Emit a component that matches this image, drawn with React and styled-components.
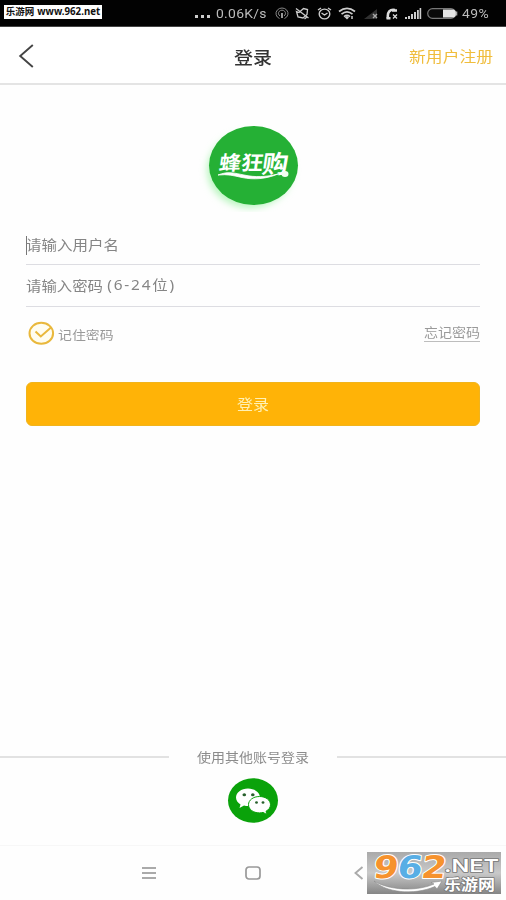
import React from 'react'
import styled, { createGlobalStyle } from 'styled-components';

const GlobalStyle = createGlobalStyle`
  body {
    margin: 0;
    background: #fefefe;
    font-family: "Noto Sans", "Noto Sans CJK SC", sans-serif;
  }

  svg {
    display: block;
    flex: none;
  }
`;

const Screen = styled.div`
  position: relative;
  display: flex;
  flex-direction: column;
  width: 506px;
  height: 900px;
  overflow: hidden;
  background: #fefefe;
`;

// The app's type is wider than it is tall
const Label = styled.span`
  display: inline-block;
  flex: none;
  white-space: nowrap;
  line-height: 1;
  font-family: ${props => props.$font || '"Noto Sans CJK SC", sans-serif'};
  font-size: ${props => props.$size}px;
  font-weight: ${props => props.$weight || 400};
  letter-spacing: ${props => props.$spacing || 0}px;
  color: ${props => props.$color};
  transform: scaleY(${props => props.$squash || 0.9});
`;

const StatusBar = styled.div`
  height: 27px;
  flex: none;
  box-sizing: border-box;
  padding: 1px 16px 0 4px;
  display: flex;
  align-items: center;
  justify-content: space-between;
  background: #020202;
  border-bottom: 1px solid #444;
`;

const SiteTag = styled.div`
  width: 98px;
  height: 14px;
  margin-top: -4px;
  display: flex;
  align-items: center;
  justify-content: center;
  gap: 3px;
  background: #fff;
`;

const StatusIcons = styled.div`
  display: flex;
  align-items: center;
`;

const Slot = styled.div`
  width: ${props => props.$width}px;
  margin-right: ${props => props.$gap || 0}px;
  display: flex;
  align-items: center;
  white-space: nowrap;
`;

const Header = styled.header`
  height: 58px;
  flex: none;
  box-sizing: border-box;
  padding: 2px 13px 0 18px;
  display: grid;
  grid-template-columns: 1fr auto 1fr;
  align-items: center;
  border-bottom: 2px solid #e4e4e4;
  background: #fff;
`;

const HeaderAction = styled.div`
  display: flex;
  justify-content: flex-end;
`;

const HeaderTitle = styled.div`
  display: flex;
  margin-right: 5px;
`;

const LogoWrap = styled.div`
  height: 141px;
  flex: none;
  display: flex;
  justify-content: center;
  padding-top: 31px;
  box-sizing: border-box;
`;

const Form = styled.main`
  flex: none;
  padding: 0 26px;
`;

const Field = styled.div`
  height: ${props => props.$height}px;
  box-sizing: border-box;
  display: flex;
  align-items: center;
  border-bottom: 1px solid #dddde2;
`;

const Caret = styled.i`
  width: 1px;
  height: 19px;
  margin-right: -1px;
  background: #777;
`;

const Options = styled.div`
  height: 75px;
  box-sizing: border-box;
  padding: 12px 0 0 2px;
  display: flex;
  justify-content: space-between;
  align-items: flex-start;
`;

const Remember = styled.div`
  display: flex;
  align-items: center;
  gap: 3px;
  height: 29px;
`;

const RememberText = styled.div`
  display: flex;
  padding-top: 5px;
`;

const Forgot = styled.div`
  margin-top: 6px;
  height: 17px;
  box-sizing: border-box;
  display: flex;
  align-items: center;
  padding-bottom: 2px;
  border-bottom: 1px solid #bdbdbd;
`;

const SubmitButton = styled.button`
  display: flex;
  align-items: center;
  justify-content: center;
  width: 454px;
  height: 44px;
  padding: 0;
  border: 1px solid #f1b41c;
  border-radius: 6px;
  background: #ffb307;
`;

const OtherLogin = styled.section`
  margin-top: auto;
  height: 96px;
  flex: none;
  display: flex;
  flex-direction: column;
  align-items: center;
`;

const Divider = styled.div`
  width: 100%;
  height: 16px;
  display: flex;
  align-items: center;
  justify-content: space-between;
`;

const Rule = styled.div`
  width: 169px;
  height: 2px;
  background: #e2e2e2;
`;

const WechatWrap = styled.div`
  margin-top: 13px;
`;

const NavBar = styled.nav`
  height: 55px;
  flex: none;
  box-sizing: border-box;
  padding: 0 141px;
  display: flex;
  align-items: center;
  gap: 88px;
  border-top: 1px solid #f7f7f7;
`;

const NavBack = styled.div`
  margin-left: 5px;
`;

const Watermark = styled.div`
  position: absolute;
  left: 367px;
  top: 852px;
  width: 134px;
  height: 42px;
  background: linear-gradient(#aaaaaa, #c9c9c9 50%, #858585);
`;

const SignalIcon = ({ color, off }) => (
  <svg width="17" height="12" viewBox="0 0 17 12" fill={color}>
    {off
      ? <path d="M1 11 14 1v10z" fill="#303030" />
      : <path d="M0 9h2v2H0zM3 8h2v3H3zM6 6h2v5H6zM9 4h2v7H9zM12 2h1.8v9H12zM14.6 0h1.6v11h-1.6z" />}
    {off && <path d="m10 6 4 4m0-4-4 4" stroke="#aaa" strokeWidth="1.4" />}
  </svg>
);

const HotspotIcon = () => (
  <svg width="14" height="13" viewBox="0 0 14 13" fill="none" stroke="#888" strokeWidth="1">
    <path d="M4.5 11.5a6 5.5 0 1 1 5 0M5 9a3.5 3.2 0 1 1 4 0" />
    <path d="M7 6v5" stroke="#aaa" strokeWidth="1.8" />
  </svg>
);

const MuteIcon = () => (
  <svg width="15" height="13" viewBox="0 0 15 13" fill="none" stroke="#ccc" strokeWidth="1.3">
    <path d="M1.500 4.500 4 5.500 8.500 1.500l4 1-.5 5-4 3.500-5-1z" />
    <path d="M1 1.500 13.500 11M9.500 12l3-2.500" />
  </svg>
);

const AlarmIcon = () => (
  <svg width="15" height="13" viewBox="0 0 15 13" fill="none" stroke="#ccc" strokeWidth="1.4">
    <ellipse cx="7.5" cy="7" rx="5.300" ry="4.900" />
    <path d="M1 3 4 1M14 3l-3-2M4.500 6l3 2 3-2" />
  </svg>
);

const WifiIcon = () => (
  <svg width="18" height="13" viewBox="0 0 18 13" fill="none" stroke="#ccc" strokeWidth="1.7">
    <path d="M1 4.500c5-4 11-4 16 0M3.500 7.200c3.500-2.900 7.500-2.900 11 0M6 9.600c2-1.600 4-1.600 6 0" />
    <path d="m9 9-2.500 1L9 12.500l2-2z" fill="#ccc" stroke="none" />
    <path d="M14 9v3" stroke="#999" strokeWidth="2" />
  </svg>
);

const CallIcon = () => (
  <svg width="14" height="12" viewBox="0 0 14 12" fill="none" stroke="#ddd">
    <path d="M10 2C5 1 2 4 3 10.500" strokeWidth="2.600" />
    <path d="M7 2.500h5M1.500 10.300h4" strokeWidth="2.400" />
    <path d="m8 6.500 4 4m0-4-4 4" strokeWidth="1.300" />
  </svg>
);

const BatteryIcon = () => (
  <svg width="31" height="11" viewBox="0 0 31 11">
    <rect x=".7" y=".7" width="28" height="9.600" rx="4.800" fill="#090909" stroke="#777" strokeWidth="1.200" />
    <path d="M16 1.500h9.500q3.500 0 3.500 4t-3.500 4H16z" fill="#e4e4e4" />
    <path d="M29.500 3.500v4" stroke="#aaa" strokeWidth="1.600" />
  </svg>
);

const BackIcon = () => (
  <svg width="16" height="24" viewBox="0 0 16 24" fill="none" stroke="#444" strokeWidth="1.900">
    <path d="M14.800 1 2.200 12l12.600 11" />
  </svg>
);

const BrandLogo = () => (
  <svg width="110" height="96" viewBox="0 0 110 96">
    <defs>
      <filter id="glow" x="-20%" y="-20%" width="140%" height="140%">
        <feGaussianBlur stdDeviation="3.500" />
      </filter>
    </defs>
    <ellipse cx="52" cy="54" rx="43" ry="38" fill="#b9f5bf" filter="url(#glow)" />
    <ellipse cx="55.500" cy="49.500" rx="44.500" ry="39.500" fill="#25b035" />
    <g fill="#fff" fontFamily="Noto Sans CJK SC, sans-serif" fontWeight="700" transform="skewX(-8)">
      <text x="28" y="54.500" fontSize="20" textLength="44" lengthAdjust="spacingAndGlyphs">蜂狂</text>
      <text x="71" y="57" fontSize="25" textLength="26" lengthAdjust="spacingAndGlyphs">购</text>
    </g>
    <path d="M20 59c10-4 16-2 26 0 11 2.500 22 2 34-1-12 5-24 6-36 3.500-9-2-14-3.500-24-2.500z" fill="#fff" stroke="#fff" strokeWidth=".8" />
    <ellipse cx="87" cy="58" rx="3.500" ry="3" fill="#f1fff0" />
  </svg>
);

const CheckIcon = () => (
  <svg width="27" height="25" viewBox="0 0 27 25" fill="none" stroke="#e9b83c" strokeWidth="2">
    <ellipse cx="13.300" cy="12.300" rx="11.800" ry="10.500" fill="#fffdf0" />
    <path d="m7.500 10.500 5.300 5L23 6.500" />
  </svg>
);

const WechatIcon = () => (
  <svg width="52" height="46" viewBox="0 0 52 46">
    <ellipse cx="26" cy="22.500" rx="25" ry="22.300" fill="#0aa20a" />
    <path d="M21 10.500c-6.800 0-12 4-12 9 0 3 1.800 5.200 4.500 6.900L12.500 30l4.500-2.500c1.500.4 2.600.5 4 .5 6.800 0 12-3.800 12-8.500s-5.200-9-12-9z" fill="#fff" />
    <path d="M32.500 18.500c-6.300 0-11 3.600-11 8.200s4.700 8.200 11 8.200c1.200 0 2.400-.2 3.500-.5l4 2.200-1-3.300c2.700-1.500 4.500-3.800 4.500-6.600 0-4.600-4.700-8.200-11-8.200z" fill="#fff" stroke="#0aa20a" />
    <g fill="#28602c">
      <ellipse cx="17.300" cy="16.800" rx="1.800" ry="1.500" />
      <ellipse cx="25.800" cy="16.800" rx="1.800" ry="1.500" />
      <ellipse cx="29.500" cy="24.500" rx="1.400" ry="1.200" />
      <ellipse cx="36" cy="24.500" rx="1.400" ry="1.200" />
    </g>
  </svg>
);

const WatermarkArt = () => (
  <svg width="134" height="42" viewBox="0 0 134 42" strokeLinejoin="round">
    <g fontFamily="DejaVu Sans, sans-serif" fontWeight="700" fontSize="31" stroke="#fff" strokeWidth="2" paintOrder="stroke" transform="skewX(-8)">
      <text x="9" y="26" textLength="25" lengthAdjust="spacingAndGlyphs" fill="#f6922d">9</text>
      <text x="33" y="26" textLength="25" lengthAdjust="spacingAndGlyphs" fill="#58aee5">6</text>
      <text x="57" y="26" textLength="25" lengthAdjust="spacingAndGlyphs" fill="#f6922d">2</text>
    </g>
    <path d="M7 29c14 9 42 11 60 3l-3-1.500 11-1.500-5 8-2-2.500C46 44 18 40 7 29z" fill="#fff" stroke="#888" strokeWidth=".6" />
    <g fill="#fff" stroke="#777" strokeWidth="1.500" paintOrder="stroke">
      <text x="77" y="19.500" fontFamily="Inter, sans-serif" fontWeight="600" fontSize="17" textLength="55" lengthAdjust="spacingAndGlyphs">.NET</text>
      <text x="77" y="37.500" fontFamily="Noto Sans CJK SC, sans-serif" fontWeight="700" fontSize="15" textLength="51" lengthAdjust="spacingAndGlyphs">乐游网</text>
    </g>
  </svg>
);

const StatusRow = () => (
  <StatusBar>
    <SiteTag>
      <Label $size={9.5} $weight={700} $color="#111" $squash={1}>乐游网</Label>
      <Label $size={9.7} $weight={700} $color="#111" $squash={1} $font='"Noto Sans", sans-serif'>www.962.net</Label>
    </SiteTag>
    <StatusIcons>
      <Slot $width={15} $gap={6}>
        <svg width="15" height="13" viewBox="0 0 15 13" fill="#ccc">
          <path d="M0 8h3v3H0zM6 8h3v3H6zM12 8h3v3h-3z" />
        </svg>
      </Slot>
      <Slot $width={52} $gap={7}>
        <Label $size={13.9} $color="#bbb" $squash={0.95} $font="Roboto, sans-serif" $spacing={0.3}>0.06K/s</Label>
      </Slot>
      <Slot $width={14} $gap={6}><HotspotIcon /></Slot>
      <Slot $width={15} $gap={7}><MuteIcon /></Slot>
      <Slot $width={15} $gap={6}><AlarmIcon /></Slot>
      <Slot $width={18} $gap={7}><WifiIcon /></Slot>
      <Slot $width={17} $gap={5}><SignalIcon off /></Slot>
      <Slot $width={14} $gap={6}><CallIcon /></Slot>
      <Slot $width={17} $gap={5}><SignalIcon color="#ccc" /></Slot>
      <Slot $width={31} $gap={4}><BatteryIcon /></Slot>
      <Slot $width={28}>
        <Label $size={13.9} $color="#bbb" $squash={0.95} $font="Roboto, sans-serif" $spacing={0.4}>49%</Label>
      </Slot>
    </StatusIcons>
  </StatusBar>
);

const App = () => (
  <Screen>
    <GlobalStyle />
    <StatusRow />
    <Header>
      <BackIcon />
      <HeaderTitle>
        <Label $size={19} $weight={500} $color="#333">登录</Label>
      </HeaderTitle>
      <HeaderAction>
        <Label $size={16.8} $color="#f0bd3c">新用户注册</Label>
      </HeaderAction>
    </Header>
    <LogoWrap>
      <BrandLogo />
    </LogoWrap>
    <Form>
      <Field $height={39}>
        <Caret />
        <Label $size={15.5} $color="#858585">请输入用户名</Label>
      </Field>
      <Field $height={42}>
        <Label $size={15.4} $color="#858585">请输入密码</Label>
        <Label $size={15.4} $color="#858585" $spacing={1.8} $font='"Noto Sans", "Noto Sans CJK SC", sans-serif'>&#8201;(6-24位)</Label>
      </Field>
      <Options>
        <Remember>
          <CheckIcon />
          <RememberText>
            <Label $size={13.9} $color="#999">记住密码</Label>
          </RememberText>
        </Remember>
        <Forgot>
          <Label $size={14} $color="#999">忘记密码</Label>
        </Forgot>
      </Options>
      <SubmitButton>
        <Label $size={16} $color="#fff1b5">登录</Label>
      </SubmitButton>
    </Form>
    <OtherLogin>
      <Divider>
        <Rule />
        <Label $size={14} $color="#8c8c8c">使用其他账号登录</Label>
        <Rule />
      </Divider>
      <WechatWrap>
        <WechatIcon />
      </WechatWrap>
    </OtherLogin>
    <NavBar>
      <svg width="16" height="14" viewBox="0 0 16 14" stroke="#aaa" strokeWidth="1.800">
        <path d="M1 2h14M1 7h14M1 12h14" />
      </svg>
      <svg width="16" height="14" viewBox="0 0 16 14" fill="none" stroke="#999" strokeWidth="1.700">
        <rect x="1" y="1" width="14" height="12" rx="3" />
      </svg>
      <NavBack>
        <svg width="10" height="14" viewBox="0 0 10 14" fill="none" stroke="#aaa" strokeWidth="1.900">
          <path d="M8.500 1 1.500 7l7 6" />
        </svg>
      </NavBack>
    </NavBar>
    <Watermark>
      <WatermarkArt />
    </Watermark>
  </Screen>
);

export default App;
